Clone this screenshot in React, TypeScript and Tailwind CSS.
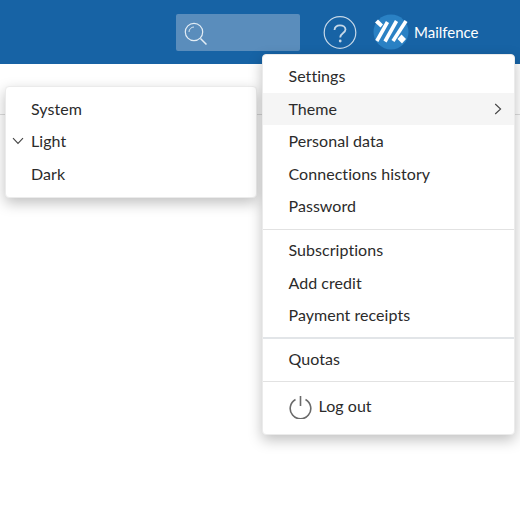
import React from "react";

function Item({ children, active, right }: { children: React.ReactNode; active?: boolean; right?: React.ReactNode }) {
  return (
    <div className={`h-[32.5px] pl-[25.5px] pr-[12px] flex items-center justify-between text-[16px] tracking-[0.05px] text-[#2b2b2b] ${active ? "bg-[#f5f5f5]" : ""}`}>
      <span>{children}</span>
      {right}
    </div>
  );
}

function SubItem({ children, checked }: { children: React.ReactNode; checked?: boolean }) {
  return (
    <div className="h-[32.5px] flex items-center text-[16px] tracking-[0.05px] text-[#2b2b2b]">
      <span className="w-[25px] flex justify-start pl-[6px]">
        {checked && (
          <svg width="12" height="8" viewBox="0 0 12 8" fill="none" stroke="#444" strokeWidth="1.1">
            <path d="M1 1.2 L6 6.4 L11 1.2" />
          </svg>
        )}
      </span>
      <span>{children}</span>
    </div>
  );
}

export default function App() {
  return (
    <div className="relative w-[520px] h-[522px] overflow-hidden bg-white font-['Lato','Liberation_Sans',sans-serif]">
      <header className="h-[64px] bg-[#1763a5] flex items-center">
        <div className="ml-[176px] w-[124px] h-[37px] mt-[1px] rounded-[2px] bg-[#5a8dbc] flex items-center pl-[8px]">
          <svg className="mt-[2px]" width="24" height="24" viewBox="0 0 24 24" fill="none" stroke="#e3edf5" strokeWidth="1.2">
            <circle cx="10" cy="10" r="8.7" />
            <path d="M16.5 16.5 L22.5 22.5" strokeWidth="1.5" />
            <path d="M5 10 A5 5 0 0 1 10 5" strokeWidth="0.9" />
          </svg>
        </div>
        <svg className="ml-[23px]" width="34" height="34" viewBox="0 0 34 34" fill="none">
          <circle cx="17" cy="17.5" r="15.8" stroke="#c6d8e8" strokeWidth="1.2" />
          <path d="M11.5 15 C11.7 12 14 10.3 17 10.3 C20 10.3 22.5 12 22.5 14.6 C22.5 18 17.2 18 17.2 22.5" stroke="#c6d8e8" strokeWidth="1.8" />
          <circle cx="17.2" cy="26" r="1.4" fill="#c6d8e8" />
        </svg>
        <svg className="ml-[16px]" width="36" height="36" viewBox="0 0 36 36">
          <circle cx="18" cy="18" r="17.5" fill="#2a81c4" />
          <path d="M2 8.5 L5 5.5 L10 10.5 L7.5 13.5 Z" fill="#fff" />
          <g stroke="#fff" strokeWidth="3.6" fill="none">
            <path d="M14.5 8 L3.8 27" />
            <path d="M23.5 7 L12 27.5" />
            <path d="M33 7 L20 27" />
          </g>
          <path d="M28.5 20.5 L33 25 L29 29.5 L24.5 25 Z" fill="#fff" />
        </svg>
        <span className="ml-[5px] text-[15px] text-white">Mailfence</span>
      </header>

      <div className="mt-[50px] border-t border-[#dddddd]" />

      <div className="absolute left-[5px] top-[86px] w-[252px] h-[112px] rounded-[4px] bg-white border border-[#ebebeb] shadow-[0_5px_14px_rgba(0,0,0,0.25)] pt-[5.5px]">
        <SubItem>System</SubItem>
        <SubItem checked>Light</SubItem>
        <SubItem>Dark</SubItem>
      </div>

      <div className="absolute left-[262px] top-[54px] w-[253px] h-[381px] rounded-[4px] bg-white border border-[#ebebeb] shadow-[0_5px_14px_rgba(0,0,0,0.25)] pt-[5px]">
        <Item>Settings</Item>
        <Item active right={
          <svg width="8" height="12" viewBox="0 0 8 12" fill="none" stroke="#444" strokeWidth="1.1">
            <path d="M1.2 1 L6.6 6 L1.2 11" />
          </svg>
        }>Theme</Item>
        <Item>Personal data</Item>
        <Item>Connections history</Item>
        <Item>Password</Item>
        <div className="mt-[6px] mb-[4.5px] border-t border-[#e2e2e2]" />
        <Item>Subscriptions</Item>
        <Item>Add credit</Item>
        <Item>Payment receipts</Item>
        <div className="mt-[5.5px] mb-[4px] border-t-2 border-[#e2e5e8]" />
        <Item>Quotas</Item>
        <div className="mt-[5px] mb-[8px] border-t border-[#e2e2e2]" />
        <div className="h-[34px] pl-[25.5px] flex items-center text-[16px] tracking-[0.05px] text-[#2b2b2b]">
          <svg width="23" height="24" viewBox="0 0 23 24" fill="none" stroke="#6a6a6a" strokeWidth="1.6">
            <path d="M11.5 1 V11" />
            <path d="M6.5 4.5 A10.3 10.3 0 1 0 16.5 4.5" />
          </svg>
          <span className="ml-[7px] -mt-[2px]">Log out</span>
        </div>
      </div>
    </div>
  );
}
